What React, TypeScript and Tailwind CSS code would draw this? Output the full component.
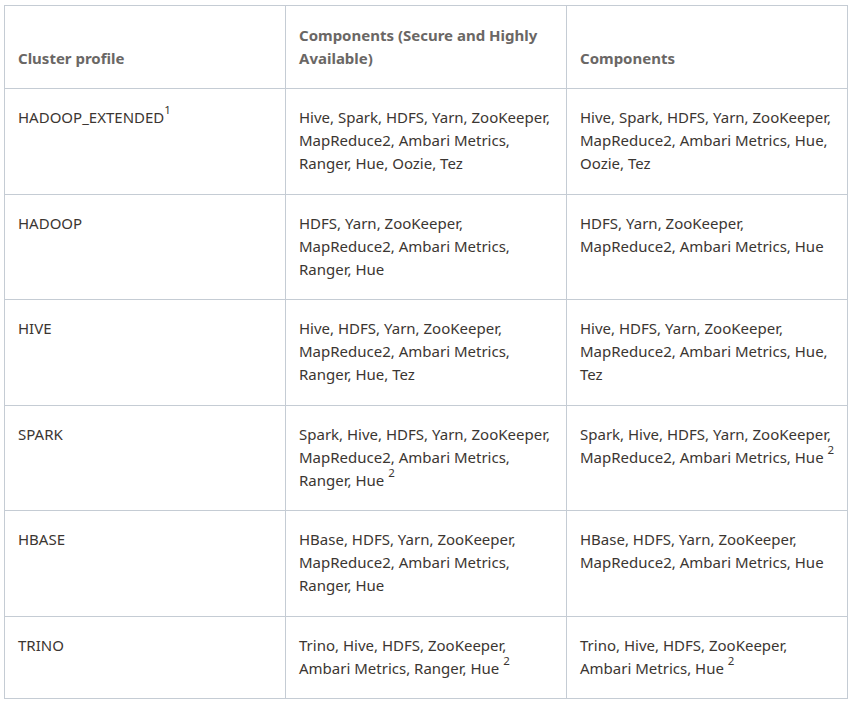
import React from 'react';

type Row = {
  profile: string;
  profileNote?: string;
  secure: string;
  secureNote?: string;
  plain: string;
  plainNote?: string;
};

const rows: Row[] = [
  {
    profile: 'HADOOP_EXTENDED',
    profileNote: '1',
    secure: 'Hive, Spark, HDFS, Yarn, ZooKeeper, MapReduce2, Ambari Metrics, Ranger, Hue, Oozie, Tez',
    plain: 'Hive, Spark, HDFS, Yarn, ZooKeeper, MapReduce2, Ambari Metrics, Hue, Oozie, Tez',
  },
  {
    profile: 'HADOOP',
    secure: 'HDFS, Yarn, ZooKeeper, MapReduce2, Ambari Metrics, Ranger, Hue',
    plain: 'HDFS, Yarn, ZooKeeper, MapReduce2, Ambari Metrics, Hue',
  },
  {
    profile: 'HIVE',
    secure: 'Hive, HDFS, Yarn, ZooKeeper, MapReduce2, Ambari Metrics, Ranger, Hue, Tez',
    plain: 'Hive, HDFS, Yarn, ZooKeeper, MapReduce2, Ambari Metrics, Hue, Tez',
  },
  {
    profile: 'SPARK',
    secure: 'Spark, Hive, HDFS, Yarn, ZooKeeper, MapReduce2, Ambari Metrics, Ranger, Hue',
    secureNote: '2',
    plain: 'Spark, Hive, HDFS, Yarn, ZooKeeper, MapReduce2, Ambari Metrics, Hue',
    plainNote: '2',
  },
  {
    profile: 'HBASE',
    secure: 'HBase, HDFS, Yarn, ZooKeeper, MapReduce2, Ambari Metrics, Ranger, Hue',
    plain: 'HBase, HDFS, Yarn, ZooKeeper, MapReduce2, Ambari Metrics, Hue',
  },
  {
    profile: 'TRINO',
    secure: 'Trino, Hive, HDFS, ZooKeeper, Ambari Metrics, Ranger, Hue',
    secureNote: '2',
    plain: 'Trino, Hive, HDFS, ZooKeeper, Ambari Metrics, Hue',
    plainNote: '2',
  },
];

// footnote marks sit well above the cap line in the docs table
const Sup = ({ n, spaced }: { n?: string; spaced?: boolean }) =>
  n ? (
    <>
      {spaced ? ' ' : ''}
      <sup className="text-[11.5px] leading-none relative -top-[9px] -mr-[4px]">{n}</sup>
    </>
  ) : null;

const th = 'border border-[#c5ccd4] pl-[13px] pr-[11px] py-[18px] align-bottom text-left font-bold text-[#6a6765]';
const td = 'border border-[#c5ccd4] pl-[13px] pr-[11px] pt-[17px] pb-[18.5px] align-top text-left';

export default function App() {
  return (
    <div className="bg-white w-[854px] h-[705px] pt-[5px] pl-[4px]" style={{ fontFamily: '"Noto Sans", sans-serif' }}>
      <table className="w-[844px] table-fixed border-collapse text-[15px] leading-[23px] text-[#3b3632]">
        <thead>
          <tr>
            <th className={th}>Cluster profile</th>
            <th className={th}>Components (Secure and Highly Available)</th>
            <th className={th}>Components</th>
          </tr>
        </thead>
        <tbody>
          {rows.map((r) => (
            <tr key={r.profile}>
              <td className={td}>
                {r.profile}
                <Sup n={r.profileNote} />
              </td>
              <td className={td}>
                {r.secure}
                <Sup n={r.secureNote} spaced />
              </td>
              <td className={td}>
                {r.plain}
                <Sup n={r.plainNote} spaced />
              </td>
            </tr>
          ))}
        </tbody>
      </table>
    </div>
  );
}
